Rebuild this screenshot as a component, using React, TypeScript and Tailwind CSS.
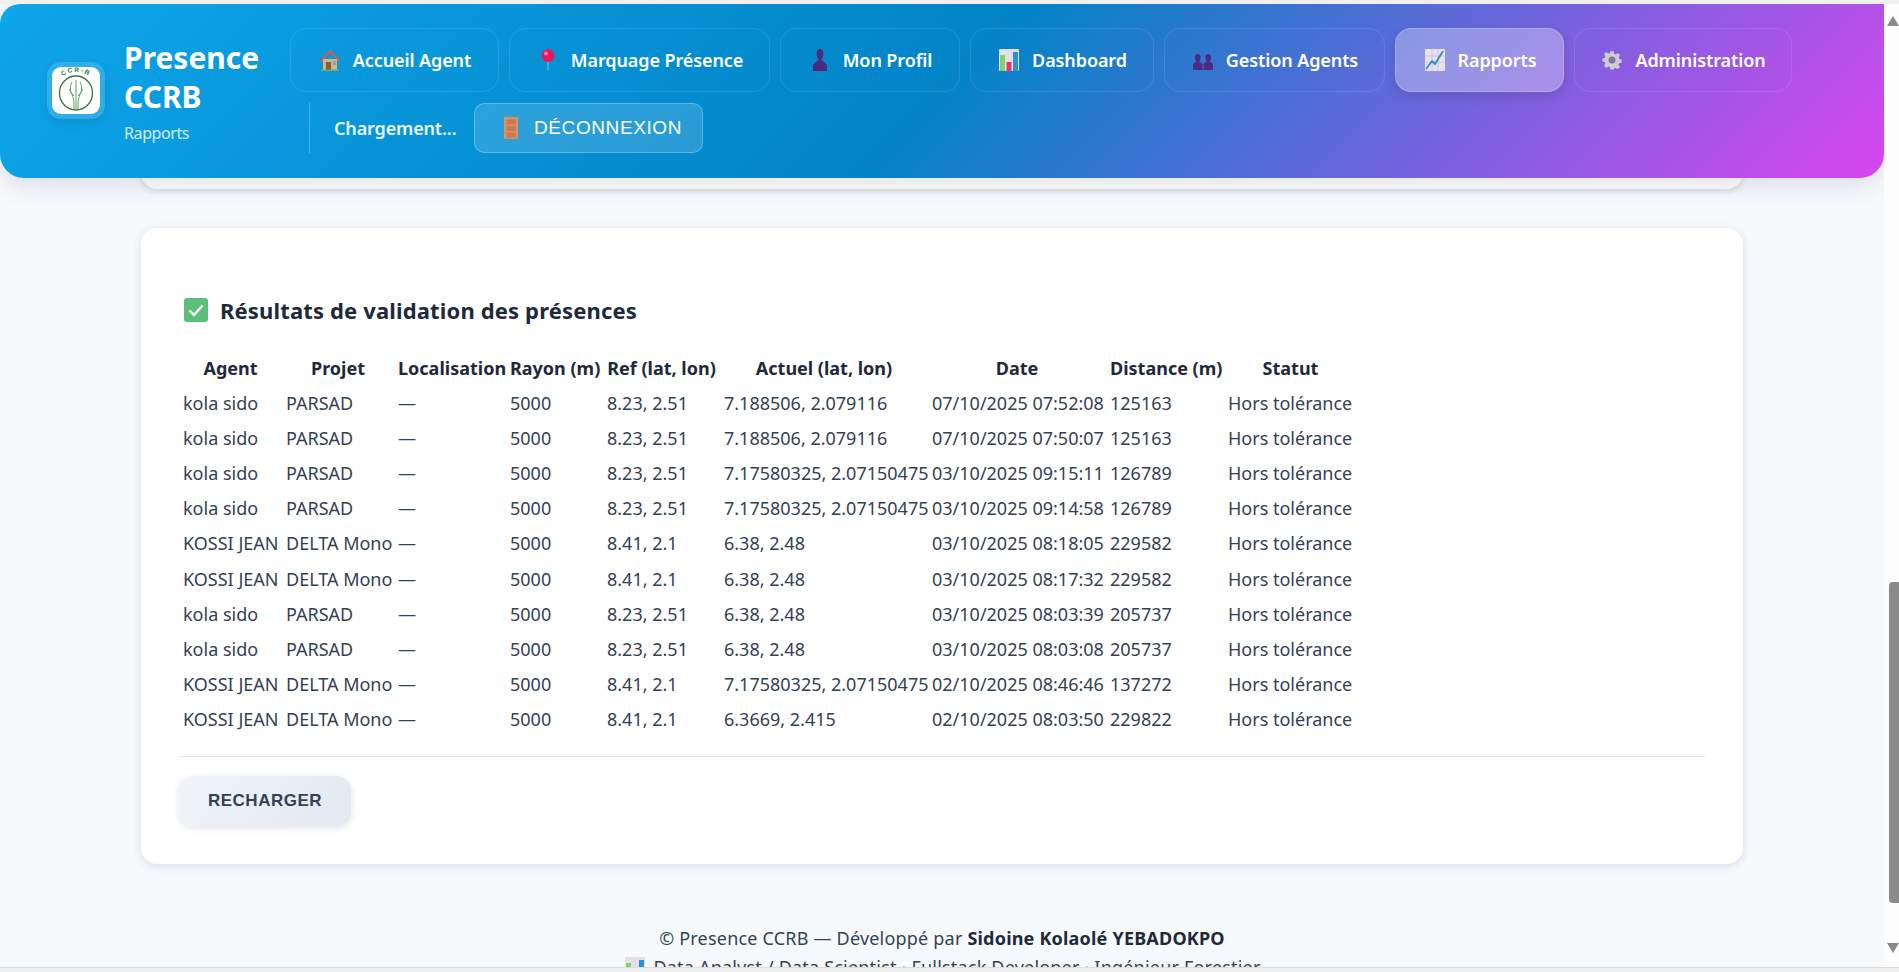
import type { ReactNode } from "react";

const rows = [
  ["kola sido", "PARSAD", "—", "5000", "8.23, 2.51", "7.188506, 2.079116", "07/10/2025 07:52:08", "125163", "Hors tolérance"],
  ["kola sido", "PARSAD", "—", "5000", "8.23, 2.51", "7.188506, 2.079116", "07/10/2025 07:50:07", "125163", "Hors tolérance"],
  ["kola sido", "PARSAD", "—", "5000", "8.23, 2.51", "7.17580325, 2.07150475", "03/10/2025 09:15:11", "126789", "Hors tolérance"],
  ["kola sido", "PARSAD", "—", "5000", "8.23, 2.51", "7.17580325, 2.07150475", "03/10/2025 09:14:58", "126789", "Hors tolérance"],
  ["KOSSI JEAN", "DELTA Mono", "—", "5000", "8.41, 2.1", "6.38, 2.48", "03/10/2025 08:18:05", "229582", "Hors tolérance"],
  ["KOSSI JEAN", "DELTA Mono", "—", "5000", "8.41, 2.1", "6.38, 2.48", "03/10/2025 08:17:32", "229582", "Hors tolérance"],
  ["kola sido", "PARSAD", "—", "5000", "8.23, 2.51", "6.38, 2.48", "03/10/2025 08:03:39", "205737", "Hors tolérance"],
  ["kola sido", "PARSAD", "—", "5000", "8.23, 2.51", "6.38, 2.48", "03/10/2025 08:03:08", "205737", "Hors tolérance"],
  ["KOSSI JEAN", "DELTA Mono", "—", "5000", "8.41, 2.1", "7.17580325, 2.07150475", "02/10/2025 08:46:46", "137272", "Hors tolérance"],
  ["KOSSI JEAN", "DELTA Mono", "—", "5000", "8.41, 2.1", "6.3669, 2.415", "02/10/2025 08:03:50", "229822", "Hors tolérance"],
];

const House = () => (
  <svg viewBox="0 0 24 24" className="h-6 w-6">
    <path d="M5 11h14v11H5z" fill="#e0b080" />
    <path d="M1.500 12.500 12 2l10.500 10.500-1.500 1L12 5 3 13.500z" fill="#e2583e" />
    <path d="M8 14h5v8H8z" fill="#8a5a44" />
    <path d="M15 13h3v4h-3z" fill="#5fb0e8" />
    <path d="M3 21.500h18V23H3z" fill="#5cb85c" />
  </svg>
);

const Pin = () => (
  <svg viewBox="0 0 24 24" className="h-6 w-6">
    <path d="M11.300 12h1.400l-.3 11h-.8z" fill="#a9a9b2" />
    <circle cx="12" cy="7.500" r="6.500" fill="#e8175d" />
    <circle cx="10" cy="5.500" r="2" fill="#f47ba3" />
  </svg>
);

const Bust = () => (
  <svg viewBox="0 0 24 24" className="h-6 w-6">
    <path d="M12 1c2.200 0 3.300 2 3.300 4.500 0 2.700-.8 4.700-1.800 6 .3 2 5 2.800 5.500 6.500v5H5v-5c.5-3.700 5.200-4.500 5.500-6.500-1-1.300-1.800-3.300-1.800-6C8.700 3 9.800 1 12 1z" fill="#4a2a82" />
  </svg>
);

const Busts = () => (
  <svg viewBox="0 0 24 24" className="h-6 w-6">
    <path d="M7 6c1.800 0 2.700 1.500 2.700 3.200 0 1.800-.7 3.100-1.500 4 .3 1 3.300 1.500 3.300 3.800V22H2v-5c0-2.300 3-2.800 3.300-3.800-.8-.9-1.500-2.200-1.500-4C3.800 7.500 5.200 6 7 6z" fill="#4a2a82" />
    <path d="M17 6c1.800 0 3.200 1.500 3.200 3.200 0 1.800-.7 3.100-1.500 4 .3 1 3.300 1.500 3.300 3.800v5h-9.500v-5c0-2.300 3-2.800 3.300-3.800-.8-.9-1.500-2.200-1.500-4C14.300 7.500 15.200 6 17 6z" fill="#4a2a82" />
  </svg>
);

const Bars = () => (
  <svg viewBox="0 0 24 24" className="h-6 w-6">
    <rect x="2" y="1" width="20" height="22" rx="1" fill="#e4e0e6" />
    <rect x="3" y="7" width="5" height="16" fill="#7fd36e" />
    <rect x="9.500" y="14" width="5" height="9" fill="#e8356f" />
    <rect x="16" y="4" width="5" height="19" fill="#2f8fd8" />
  </svg>
);

const ChartUp = () => (
  <svg viewBox="0 0 24 24" className="h-6 w-6">
    <rect x="2" y="1" width="20" height="22" rx="1" fill="#e8e2ea" />
    <path d="M2 8h20M2 14h20M9 1v22M15 1v22" stroke="#c9bfd0" strokeWidth="0.8" />
    <path d="M3 21 9 13l3 3 8-13" stroke="#2a8fc9" strokeWidth="1.800" fill="none" />
  </svg>
);

const Gear = () => (
  <svg viewBox="0 0 24 24" className="h-6 w-6">
    <path d="M10 1h4l.6 3.200 2 .9L19.400 3.300l2.800 2.800-1.800 2.800.8 2L24 11.500v4l-3 .6-.8 1.900 1.800 2.800-2.800 2.800-2.800-1.800-1.900.8L14 24h-4l-.5-3.100-1.900-.8-2.800 1.800L2 19.100l1.800-2.700-.8-2L0 14v-4l3-.6.8-2L2 4.700 4.800 2l2.800 1.800 1.900-.7z" fill="#cfcbd8" transform="translate(2.400 2.400) scale(.8)" />
    <circle cx="12" cy="12" r="3.500" fill="#7d7890" />
  </svg>
);

const Door = () => (
  <svg viewBox="0 0 24 24" className="h-6 w-6">
    <rect x="5" y="1" width="14" height="22" fill="#dc8f60" />
    <rect x="7.500" y="3.500" width="9" height="5" fill="#c67c4e" />
    <rect x="7.500" y="10" width="9" height="5" fill="#c67c4e" />
    <rect x="7.500" y="16.500" width="9" height="5" fill="#c67c4e" />
  </svg>
);

const Check = ({ className }: { className: string }) => (
  <svg viewBox="0 0 24 24" className={className}>
    <rect x="0" y="0" width="24" height="24" rx="3" fill="#5bbf7a" />
    <path d="M5.500 12.500 10 17l8.500-9.500" stroke="#fff" strokeWidth="2.400" fill="none" />
  </svg>
);

const Logo = () => (
  <svg viewBox="0 0 48 47" className="h-full w-full">
    <defs>
      <path id="logo-arc" d="M5 20C7 9 15 5 24 5s17 4 19 15" />
    </defs>
    <ellipse cx="24" cy="26" rx="16.500" ry="17" fill="none" stroke="#2f7a3c" strokeWidth="1.300" />
    <path d="M24 42V13M22 42c0-9 0-12-5-20M26 42c0-9 0-12 5-20M22 29c-5-4-4-10-2-14M26 29c5-4 4-10 2-14" fill="none" stroke="#5f9c6a" strokeWidth="1" />
    <text fontSize="6.500" fontWeight="700" fill="#2f7a3c" letterSpacing="1.500" className="font-['Liberation_Sans',sans-serif]">
      <textPath href="#logo-arc" startOffset="50%" textAnchor="middle">
        CCR-B
      </textPath>
    </text>
  </svg>
);

const nav: { label: string; icon: ReactNode; width: string; active?: boolean }[] = [
  { label: "Accueil Agent", icon: <House />, width: "w-[209px]" },
  { label: "Marquage Présence", icon: <Pin />, width: "w-[261px]" },
  { label: "Mon Profil", icon: <Bust />, width: "w-[180px]" },
  { label: "Dashboard", icon: <Bars />, width: "w-[184px]" },
  { label: "Gestion Agents", icon: <Busts />, width: "w-[221px]" },
  { label: "Rapports", icon: <ChartUp />, width: "w-[169px]", active: true },
  { label: "Administration", icon: <Gear />, width: "w-[218px]" },
];

const heads = [
  ["Agent", "w-[103px]"],
  ["Projet", "w-[112px]"],
  ["Localisation", "w-[112px]"],
  ["Rayon (m)", "w-[97px]"],
  ["Ref (lat, lon)", "w-[117px]"],
  ["Actuel (lat, lon)", "w-[208px]"],
  ["Date", "w-[178px]"],
  ["Distance (m)", "w-[118px]"],
  ["Statut", "w-[133px]"],
];

function Header() {
  return (
    <header className="relative z-10 flex h-[174px] shrink-0 items-start rounded-b-[24px] rounded-tl-[20px] bg-[linear-gradient(135deg,#0ea5e9_0%,#0284c7_50%,#d946ef_100%)] pl-[47px] shadow-[0_8px_24px_rgba(15,23,42,0.12)]">
      <div className="mt-[58px] h-[57px] w-[58px] shrink-0 rounded-[14px] bg-white/15 p-[5px] shadow-[0_4px_10px_rgba(0,0,0,0.08)]">
        <div className="h-full w-full rounded-[9px] bg-white">
          <Logo />
        </div>
      </div>
      <div className="ml-[19px] w-[166px] shrink-0 pt-[34px] text-white">
        <div className="text-[30px] leading-[39px] font-bold">
          Presence
          <br />
          CCRB
        </div>
        <div className="mt-[6px] text-[16px] leading-[22px] tracking-[-0.4px] text-white/80">Rapports</div>
      </div>
      <div className="flex flex-col pt-[24px]">
        <nav className="flex gap-[10px]">
          {nav.map((item) => (
            <a
              key={item.label}
              className={`flex h-[64px] items-center justify-center gap-[11px] rounded-[16px] border text-[18px] font-semibold tracking-[-0.1px] text-white ${item.width} ${
                item.active
                  ? "border-white/20 bg-white/30 shadow-[0_4px_12px_rgba(0,0,0,0.12)]"
                  : "border-white/10"
              }`}
            >
              {item.icon}
              {item.label}
            </a>
          ))}
        </nav>
        <div className="mt-[11px] flex h-[50px] items-center pl-[19px]">
          <div className="h-full border-l border-white/25" />
          <span className="ml-[24px] w-[140px] text-[18px] font-semibold tracking-[-0.15px] text-white/90">Chargement...</span>
          <button className="flex h-full w-[229px] items-center gap-[11px] rounded-[10px] border border-white/25 bg-white/15 pl-[24px] font-['Liberation_Sans',sans-serif] text-[19px] tracking-[0.6px] text-white">
            <Door />
            DÉCONNEXION
          </button>
        </div>
      </div>
    </header>
  );
}

function ResultsCard() {
  return (
    <section className="mx-[141px] mt-[39px] h-[636px] shrink-0 rounded-[16px] bg-white px-[38px] pt-[70px] shadow-[0_2px_10px_rgba(15,23,42,0.14)]">
      <h2 className="flex h-[24px] items-center gap-[12px] pl-[5px] text-[22px] font-bold tracking-[0.15px] text-[#1e293b]">
        <Check className="h-[24px] w-[24px]" />
        Résultats de validation des présences
      </h2>
      <table className="mt-[29px] w-[1178px] table-fixed border-collapse text-[18px] text-[#334155]">
        <thead>
          <tr className="h-[35px] text-[#1e293b]">
            {heads.map(([label, width]) => (
              <th key={label} className={`px-[4px] text-center font-bold whitespace-nowrap ${width}`}>
                {label}
              </th>
            ))}
          </tr>
        </thead>
        <tbody>
          {rows.map((row, i) => (
            <tr key={i} className="h-[35.100px]">
              {row.map((cell, j) => (
                <td key={j} className="px-[4px] whitespace-nowrap">
                  {cell}
                </td>
              ))}
            </tr>
          ))}
        </tbody>
      </table>
      <div className="mt-[19px] border-t border-[#e5e7eb] pt-[19px]">
        <button className="h-[50px] w-[172px] rounded-[14px] bg-[linear-gradient(135deg,#f1f5f9,#e2e8f0)] font-['Liberation_Sans',sans-serif] text-[17px] font-bold tracking-[0.5px] text-[#334155] shadow-[0_2px_6px_rgba(15,23,42,0.12)]">
          RECHARGER
        </button>
      </div>
    </section>
  );
}

function Scrollbar() {
  return (
    <div className="flex w-[15px] shrink-0 flex-col items-end bg-[#fdfdfd] pt-[12px]">
      <div className="h-0 w-0 border-x-[6px] border-b-[10px] border-x-transparent border-b-[#8a8a8a]" />
      <div className="mt-[556px] h-[321px] w-[10px] shrink-0 rounded-l-[4px] bg-[#8a8a8a]" />
      <div className="mt-[40px] h-0 w-0 border-x-[6px] border-t-[10px] border-x-transparent border-t-[#8a8a8a]" />
    </div>
  );
}

export default function App() {
  return (
    <div className="flex h-screen w-full flex-col overflow-hidden bg-[#f0f0f0] font-['Noto_Sans',sans-serif]">
      <div className="h-[4px] shrink-0" />
      <div className="flex min-h-0 flex-1 bg-[#f7fafd]">
        <div className="flex min-w-0 flex-1 flex-col overflow-hidden">
          <Header />
          <div className="relative mx-[141px] -mt-[20px] h-[31px] shrink-0 rounded-b-[16px] bg-white shadow-[0_2px_6px_rgba(15,23,42,0.14)]" />
          <ResultsCard />
          <footer className="mt-[61px] shrink-0 text-center text-[18px] leading-[27px] tracking-[0.2px] text-[#334155]">
            <p>
              © Presence CCRB — Développé par <strong className="font-bold text-[#1e293b]">Sidoine Kolaolé YEBADOKPO</strong>
            </p>
            <p className="mt-[2px] flex items-center justify-center gap-[6px]">
              <Bars />
              Data Analyst / Data Scientist · Fullstack Developer · Ingénieur Forestier
            </p>
          </footer>
        </div>
        <Scrollbar />
      </div>
      <div className="h-[5px] shrink-0 border-t border-[#dcdcdc]" />
    </div>
  );
}
